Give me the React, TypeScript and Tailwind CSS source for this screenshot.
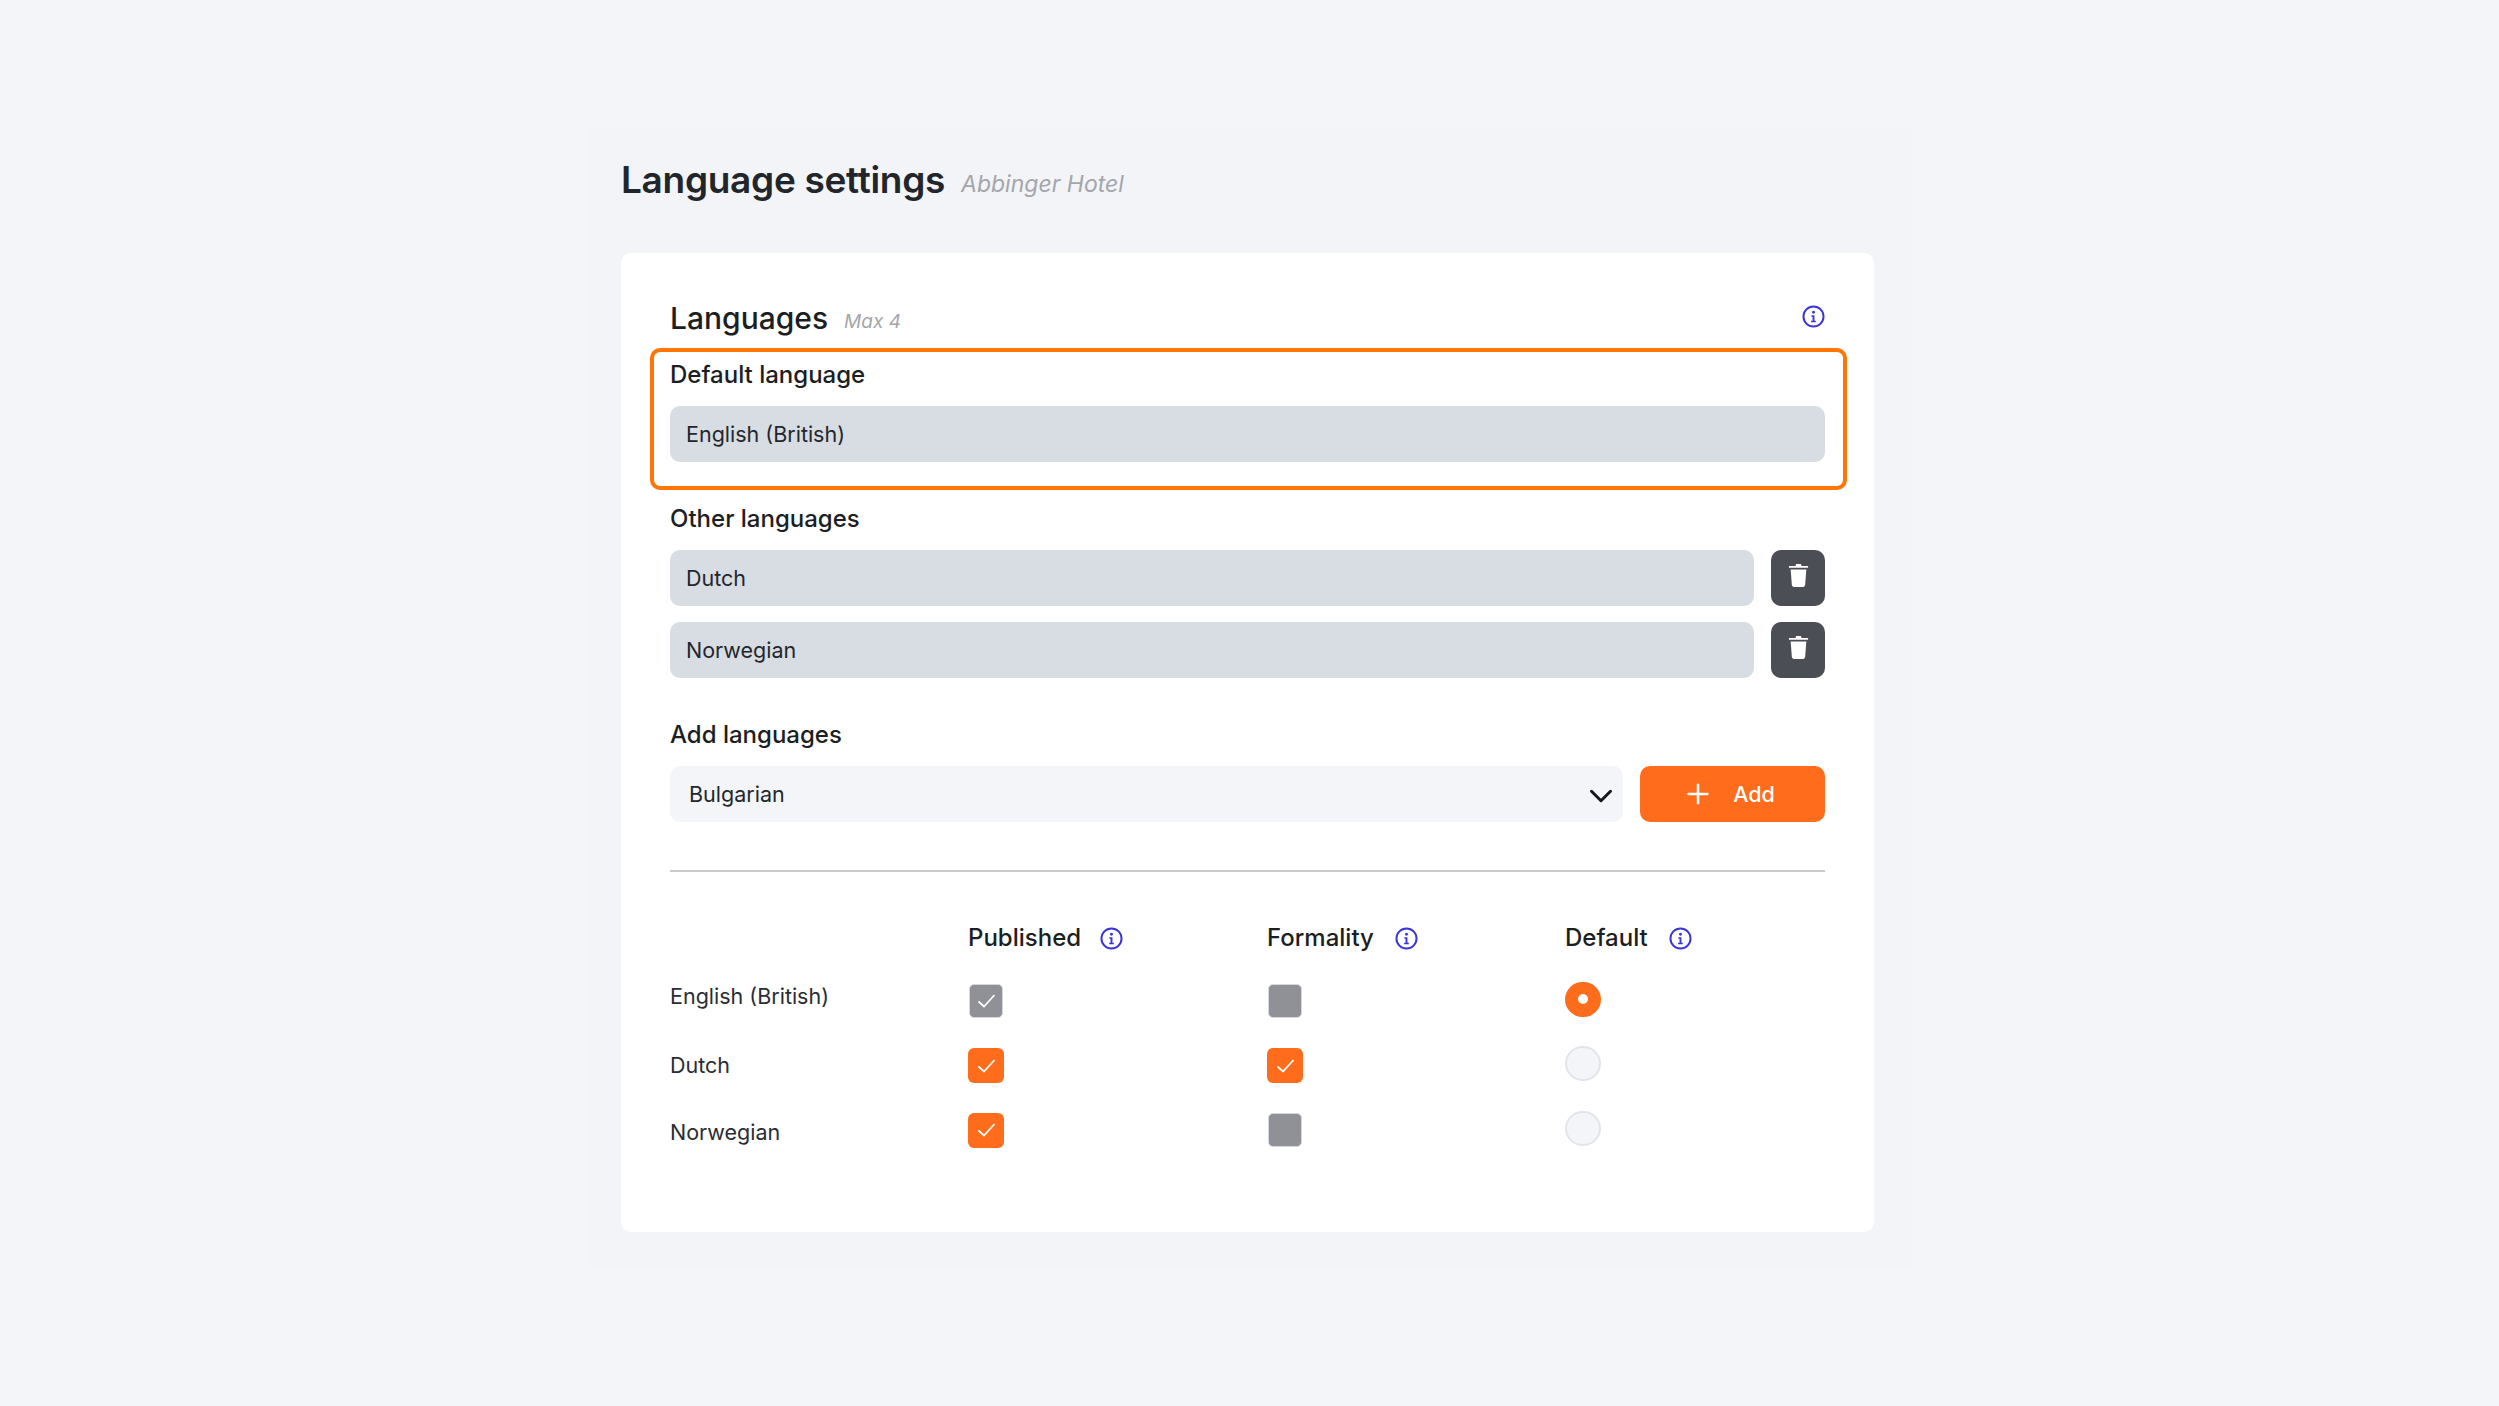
import { ChevronDown, Plus } from 'lucide-react'

const font = { fontFamily: '"Inter", "Liberation Sans", sans-serif' }

function InfoIcon() {
    return (
        <svg viewBox="0 0 22 22" className="w-[23px] h-[23px] shrink-0" fill="none">
            <circle cx="11" cy="11" r="9.6" stroke="#3b35d6" strokeWidth="1.9" />
            <circle cx="11" cy="6.9" r="1.35" fill="#3b35d6" />
            <path d="M9 9.8h2.9v5.3h1.3v1.4H8.7v-1.4h1.4v-3.9H9z" fill="#3b35d6" />
        </svg>
    )
}

function TrashIcon() {
    return (
        <svg viewBox="0 0 22 26" className="w-[21px] h-[25px]" fill="#fff">
            <path d="M8 2.2C8 1.4 8.6 1 9.4 1h3.2c.8 0 1.4.4 1.4 1.2V3h6.2c.6 0 1 .4 1 1s-.4 1-1 1H1.8c-.6 0-1-.4-1-1s.4-1 1-1H8z" />
            <path d="M2.8 6.6h16.4l-1.2 16.2c-.1 1.3-1 2.2-2.3 2.2H6.3c-1.3 0-2.2-.9-2.3-2.2z" />
        </svg>
    )
}

function CheckMark() {
    return (
        <svg viewBox="0 0 20 16" className="w-[21px] h-[16px]" fill="none">
            <path d="M2 8.5l5.5 5L18 2" stroke="#fff" strokeWidth="1.7" />
        </svg>
    )
}

function Checkbox({ state }: { state: 'on' | 'locked' | 'off' }) {
    if (state === 'on') {
        return (
            <div className="w-[36px] h-[35px] rounded-[6px] bg-[#ff6c1c] flex items-center justify-center">
                <CheckMark />
            </div>
        )
    }
    return (
        <div className="ml-px w-[34px] h-[34px] rounded-[5px] bg-[#8f9196] border border-[#d5d8de] flex items-center justify-center">
            {state === 'locked' && <CheckMark />}
        </div>
    )
}

function Radio({ on }: { on: boolean }) {
    if (on) {
        return (
            <div className="mb-1 w-[36px] h-[35px] rounded-full bg-[#ff6c1c] flex items-center justify-center">
                <div className="w-[10px] h-[10px] rounded-full bg-white" />
            </div>
        )
    }
    return <div className="mb-1 w-[36px] h-[35px] rounded-full bg-[#f3f5f9] border-2 border-[#e1e4ea]" />
}

function Field({ label }: { label: string }) {
    return (
        <div className="flex-1 h-[56px] rounded-[10px] bg-[#d8dde3] flex items-center pl-4 text-[21.5px] text-[#23272c]">
            {label}
        </div>
    )
}

function ColumnTitle({ label, widthClass }: { label: string; widthClass: string }) {
    return (
        <div className={`h-[42px] pt-[2px] flex items-center justify-between text-[24px] font-[450] text-[#1b1e23] ${widthClass}`}>
            {label}
            <InfoIcon />
        </div>
    )
}

const rows = [
    { name: 'English (British)', published: 'locked', formality: 'off', isDefault: true, labelClass: 'pb-[10px]' },
    { name: 'Dutch', published: 'on', formality: 'on', isDefault: false, labelClass: 'pb-[1px]' },
    { name: 'Norwegian', published: 'on', formality: 'off', isDefault: false, labelClass: 'pt-[3px]' },
] as const

export default function App() {
    return (
        <div style={font} className="min-h-screen bg-[#f3f5f9] pt-[128px] pb-[138px]">
            <div className="ml-[590px] w-[1323px] bg-[#f2f4f8] pl-[31px] pr-[39px] pt-[26px] pb-[36px]">
                {/* Header */}
                <div className="h-[52px] mb-[47px] flex items-center gap-[16px]">
                    <h1 className="text-[37px] tracking-[-0.3px] font-semibold text-[#22262b]">Language settings</h1>
                    <span className="mt-[8px] text-[23px] italic text-[#a4a6ab]">Abbinger Hotel</span>
                </div>

                {/* Card */}
                <div className="h-[979px] rounded-[10px] bg-white px-[49px] pt-[41px]">
                    <div className="h-[48px] flex items-center">
                        <h2 className="text-[30px] font-medium text-[#1b1e23]">Languages</h2>
                        <span className="ml-[16px] mt-[8px] text-[19px] italic text-[#a4a6ab]">Max 4</span>
                        <div className="ml-auto mb-[3px]">
                            <InfoIcon />
                        </div>
                    </div>

                    <div className="mt-[6px] -ml-[20px] -mr-[22px] h-[142px] rounded-[10px] border-4 border-[#ff7506] pl-[16px] pr-[18px]">
                        <div className="h-[44px] pt-[2px] flex items-center text-[24px] font-[450] text-[#1b1e23]">Default language</div>
                        <div className="mt-[10px] flex">
                            <Field label="English (British)" />
                        </div>
                    </div>

                    <div className="mt-[8px] h-[40px] pt-[1px] flex items-center text-[24px] font-[450] text-[#1b1e23]">Other languages</div>
                    <div className="mt-[12px] flex flex-col gap-4">
                        {['Dutch', 'Norwegian'].map(lang => (
                            <div key={lang} className="flex gap-[17px]">
                                <Field label={lang} />
                                <button className="w-[54px] h-[56px] rounded-[10px] bg-[#4b4e55] flex items-center justify-center pb-[5px]">
                                    <TrashIcon />
                                </button>
                            </div>
                        ))}
                    </div>

                    <div className="mt-[36px] h-[40px] pt-[1px] flex items-center text-[24px] font-[450] text-[#1b1e23]">Add languages</div>
                    <div className="mt-[12px] flex gap-[17px]">
                        <div className="flex-1 h-[56px] rounded-[10px] bg-[#f3f5f9] flex items-center justify-between pl-[19px] pr-[3px] text-[21.5px] text-[#23272c]">
                            Bulgarian
                            <ChevronDown size={38} strokeWidth={1.9} className="text-[#16181c] mt-[3px]" />
                        </div>
                        <button className="w-[185px] h-[56px] rounded-[10px] bg-[#ff6c1c] flex items-center justify-center gap-[19px] pr-[8px] text-[21.5px] font-[450] text-white">
                            <Plus size={32} strokeWidth={1.9} />
                            Add
                        </button>
                    </div>

                    <div className="mt-[48px] h-[2px] bg-[#cbcbcb]" />

                    {/* Table */}
                    <div className="mt-[44px] grid grid-cols-[298px_299px_298px_1fr]">
                        <div />
                        <ColumnTitle label="Published" widthClass="w-[155px]" />
                        <ColumnTitle label="Formality" widthClass="w-[151px]" />
                        <ColumnTitle label="Default" widthClass="w-[127px]" />
                    </div>
                    <div className="mt-[11px]">
                        {rows.map(row => (
                            <div key={row.name} className="h-[64.5px] grid grid-cols-[298px_299px_298px_1fr] items-center">
                                <div className={`text-[21.5px] text-[#2a2d33] ${row.labelClass}`}>{row.name}</div>
                                <Checkbox state={row.published} />
                                <Checkbox state={row.formality} />
                                <Radio on={row.isDefault} />
                            </div>
                        ))}
                    </div>
                </div>
            </div>
        </div>
    )
}
